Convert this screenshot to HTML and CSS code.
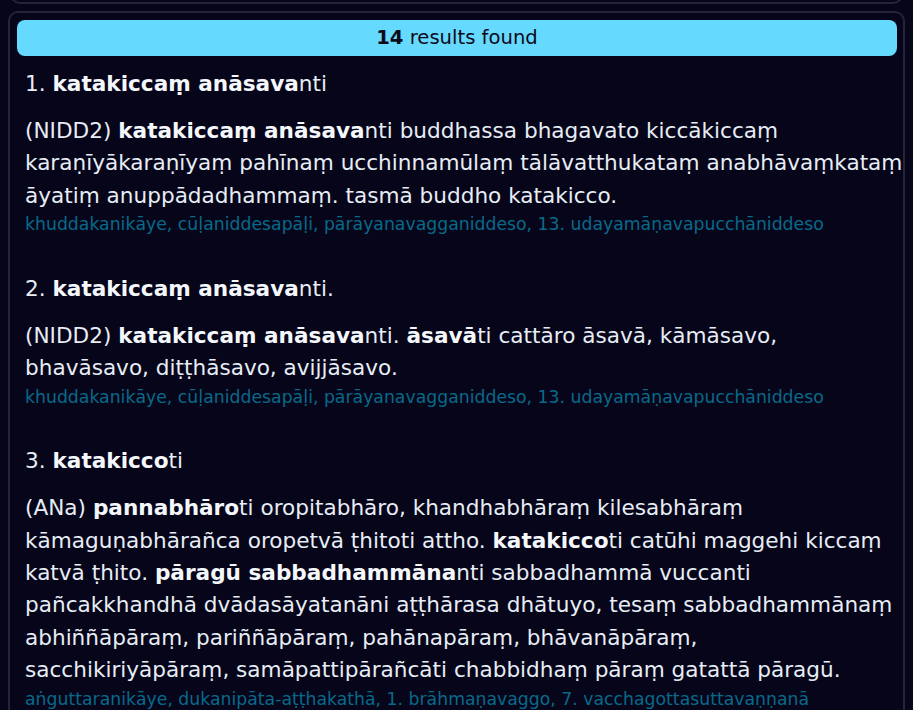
FILE: index.html
```html
<!DOCTYPE html>
<html lang="pi">
<head>
<meta charset="utf-8">
<title>Search results</title>
<link rel="stylesheet" href="styles.css">
</head>
<body>
<div class="search-panel"></div>
<section class="results-panel">
  <div class="banner"><b>14</b> results found</div>
  <article class="result">
    <h3 class="result-title">1. <b>katakiccaṃ anāsava</b>nti</h3>
    <p class="result-text">(NIDD2) <b>katakiccaṃ anāsava</b>nti buddhassa bhagavato kiccākiccaṃ karaṇīyākaraṇīyaṃ pahīnaṃ ucchinnamūlaṃ tālāvatthukataṃ anabhāvaṃkataṃ āyatiṃ anuppādadhammaṃ. tasmā buddho katakicco.</p>
    <p class="result-source">khuddakanikāye, cūḷaniddesapāḷi, pārāyanavagganiddeso, 13. udayamāṇavapucchāniddeso</p>
  </article>
  <article class="result">
    <h3 class="result-title">2. <b>katakiccaṃ anāsava</b>nti.</h3>
    <p class="result-text">(NIDD2) <b>katakiccaṃ anāsava</b>nti. <b>āsavā</b>ti cattāro āsavā, kāmāsavo, bhavāsavo, diṭṭhāsavo, avijjāsavo.</p>
    <p class="result-source">khuddakanikāye, cūḷaniddesapāḷi, pārāyanavagganiddeso, 13. udayamāṇavapucchāniddeso</p>
  </article>
  <article class="result">
    <h3 class="result-title">3. <b>katakicco</b>ti</h3>
    <p class="result-text">(ANa) <b>pannabhāro</b>ti oropitabhāro, khandhabhāraṃ kilesabhāraṃ kāmaguṇabhārañca oropetvā ṭhitoti attho. <b>katakicco</b>ti catūhi maggehi kiccaṃ katvā ṭhito. <b>pāragū sabbadhammāna</b>nti sabbadhammā vuccanti pañcakkhandhā dvādasāyatanāni aṭṭhārasa dhātuyo, tesaṃ sabbadhammānaṃ abhiññāpāraṃ, pariññāpāraṃ, pahānapāraṃ, bhāvanāpāraṃ, sacchikiriyāpāraṃ, samāpattipārañcāti chabbidhaṃ pāraṃ gatattā pāragū.</p>
    <p class="result-source">aṅguttaranikāye, dukanipāta-aṭṭhakathā, 1. brāhmaṇavaggo, 7. vacchagottasuttavaṇṇanā</p>
  </article>
</section>
</body>
</html>
```

FILE: styles.css
```css
html, body {
  background: #07051a;
}
body {
  margin: 0 8px;
  font-family: "DejaVu Sans", sans-serif;
  color: #e6edf5;
}
.search-panel {
  margin: -30px 2px 0 2px;
  height: 30px;
  border: 2px solid #25243a;
  border-radius: 10px;
}
.results-panel {
  margin-top: 7px;
  border: 2px solid #25243a;
  border-radius: 10px;
  padding: 7px 0 7px 7px;
  height: 900px;
}
.banner {
  background: #66d9ff;
  color: #0b0a1a;
  border-radius: 8px;
  height: 36px;
  line-height: 36px;
  text-align: center;
  font-size: 19.6px;
  margin-right: 6px;
}
.result {
  padding: 0 0 0 8px;
  margin-bottom: 36.4px;
}
.result:first-of-type {
  margin-top: 11.8px;
}
.result-title {
  margin: 0 0 14.8px 0;
  font-size: 21.6px;
  line-height: 32.4px;
  font-weight: normal;
}
.result b {
  font-weight: bold;
  color: #f4f7fb;
}
.result-text {
  margin: 0;
  font-size: 21.6px;
  line-height: 32.4px;
}
.result-source {
  margin: 0;
  font-size: 17.28px;
  line-height: 24px;
  color: #086a8a;
}
```
